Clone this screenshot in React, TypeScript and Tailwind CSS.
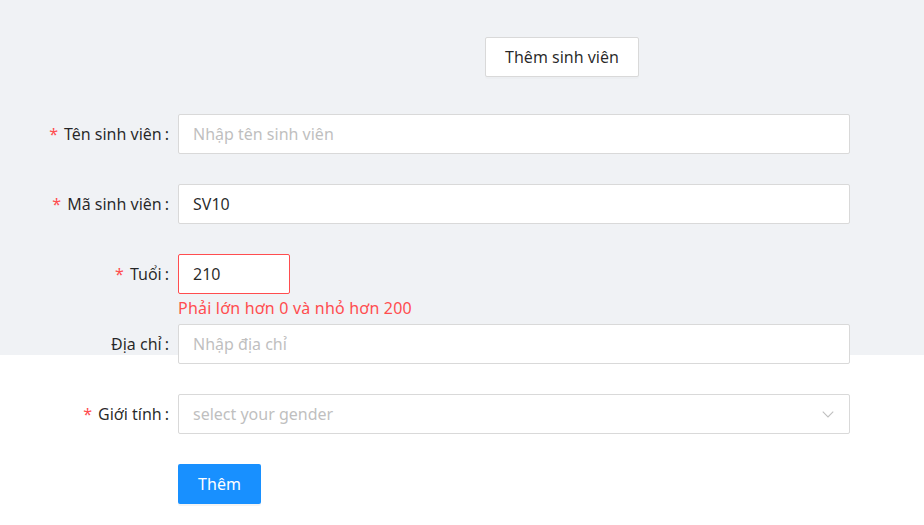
const font = { fontFamily: '"Noto Sans", "Open Sans", sans-serif' };

function Label({ text, required }: { text: string; required?: boolean }) {
    return (
        <div className="w-[178px] shrink-0 flex items-center justify-end h-10 text-base text-black/85">
            {required && <span className="text-[#ff4d4f] mr-[6px] text-base leading-none">*</span>}
            <span>{text}</span>
            <span className="ml-[3px] mr-[9px]">:</span>
        </div>
    );
}

function Row({ label, required, children, error }: { label: string; required?: boolean; children: React.ReactNode; error?: string }) {
    return (
        <div className="flex items-start h-[70px]">
            <Label text={label} required={required} />
            <div className="flex flex-col">
                {children}
                {error && <div className="text-base text-[#ff4d4f] leading-6 mt-[2px] tracking-[0.2px]">{error}</div>}
            </div>
        </div>
    );
}

function Input({ value, placeholder, width = 'w-[672px]', danger }: { value?: string; placeholder?: string; width?: string; danger?: boolean }) {
    return (
        <div className={`${width} h-10 rounded-[2px] bg-white border ${danger ? 'border-[#ff4d4f]' : 'border-[#d9d9d9]'} flex items-center px-[14px] text-base`}>
            {value ? <span className="text-black/85">{value}</span> : <span className="text-[#bfbfbf]">{placeholder}</span>}
        </div>
    );
}

export default function App() {
    return (
        <div className="min-h-[525px] bg-white" style={font}>
            <div className="h-[355px] bg-[#f0f2f5]">
                <div className="flex justify-center pl-[200px] pt-[37px]">
                    <button className="h-10 px-[19px] bg-white border border-[#d9d9d9] rounded-[2px] text-base text-black/85 shadow-[0_2px_0_rgba(0,0,0,0.015)]">
                        Thêm sinh viên
                    </button>
                </div>
                <form className="mt-[37px]">
                    <Row label="Tên sinh viên" required>
                        <Input placeholder="Nhập tên sinh viên" />
                    </Row>
                    <Row label="Mã sinh viên" required>
                        <Input value="SV10" />
                    </Row>
                    <Row label="Tuổi" required error="Phải lớn hơn 0 và nhỏ hơn 200">
                        <Input value="210" width="w-[112px]" danger />
                    </Row>
                    <Row label="Địa chỉ">
                        <Input placeholder="Nhập địa chỉ" />
                    </Row>
                    <Row label="Giới tính" required>
                        <div className="w-[672px] h-10 rounded-[2px] bg-white border border-[#d9d9d9] flex items-center justify-between pl-[14px] pr-[14px] text-base">
                            <span className="text-[#bfbfbf]">select your gender</span>
                            <svg width="14" height="14" viewBox="0 0 24 24" fill="none" stroke="#bfbfbf" strokeWidth="1.8">
                                <path d="M3 8l9 9 9-9" />
                            </svg>
                        </div>
                    </Row>
                    <div className="flex">
                        <div className="w-[178px] shrink-0" />
                        <button type="button" className="h-10 w-[83px] rounded-[2px] bg-[#1890ff] text-white text-base shadow-[0_2px_0_rgba(0,0,0,0.045)]">
                            Thêm
                        </button>
                    </div>
                </form>
            </div>
        </div>
    );
}
